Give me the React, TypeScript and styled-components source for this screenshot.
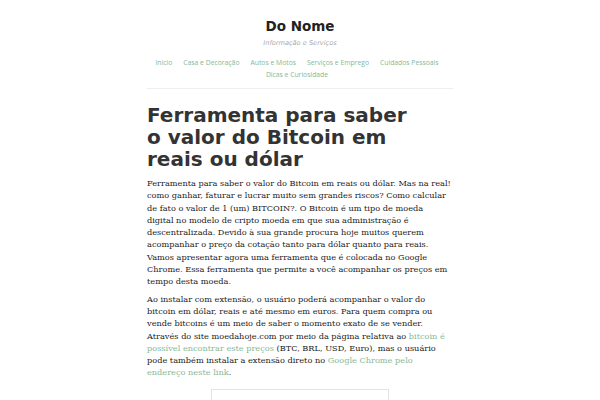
import React from 'react';
import styled, { createGlobalStyle } from 'styled-components';

const GlobalStyle = createGlobalStyle`
  html, body {
    margin: 0;
    padding: 0;
    background: #fff;
  }
  body {
    font-family: "DejaVu Serif", serif;
    color: #333;
  }
`;

const Page = styled.div`
  width: 306px;
  margin: 0 auto;
  padding-top: 17px;
`;

const Masthead = styled.header`
  text-align: center;
  padding-bottom: 8px;
  border-bottom: 1px solid #eee;
`;

const SiteTitle = styled.h1`
  margin: 0;
  font-family: "DejaVu Sans", sans-serif;
  font-weight: bold;
  font-size: 13.5px;
  line-height: 19px;
  color: #222;
`;

const Tagline = styled.div`
  margin-top: 1px;
  font-family: "DejaVu Sans", sans-serif;
  font-style: italic;
  font-size: 6.6px;
  line-height: 12px;
  color: #aaa;
`;

const Nav = styled.nav`
  margin-top: 8px;
  display: flex;
  flex-wrap: wrap;
  justify-content: center;
  column-gap: 11px;
  padding-right: 6px;
  font-family: "Open Sans", sans-serif;
  font-size: 6.8px;
  line-height: 11.5px;
`;

const NavLink = styled.a`
  color: #86b896;
  text-decoration: none;
`;

const Article = styled.article`
  padding: 15px 0 0;
`;

const Title = styled.h2`
  margin: 0 0 7px;
  max-width: 272px;
  font-family: "DejaVu Sans", sans-serif;
  font-weight: bold;
  font-size: 20px;
  line-height: 22px;
  color: #333;
`;

const Para = styled.p`
  margin: 0 0 5px;
  font-size: 8.2px;
  line-height: 12.3px;
  color: #222;
`;

const Link = styled.a`
  color: #86b896;
  text-decoration: none;
`;

const Embed = styled.div`
  width: 176px;
  height: 40px;
  margin: 10px auto 0;
  border: 1px solid #e4e4e4;
  border-bottom: none;
`;

const menu = [
  'Início',
  'Casa e Decoração',
  'Autos e Motos',
  'Serviços e Emprego',
  'Cuidados Pessoais',
  'Dicas e Curiosidade',
];

export default function App() {
  return (
    <>
      <GlobalStyle />
      <Page>
        <Masthead>
          <SiteTitle>Do Nome</SiteTitle>
          <Tagline>Informação e Serviços</Tagline>
          <Nav>
            {menu.map((item) => (
              <NavLink key={item} href="#">{item}</NavLink>
            ))}
          </Nav>
        </Masthead>
        <Article>
          <Title>Ferramenta para saber o valor do Bitcoin em reais ou dólar</Title>
          <Para>
            Ferramenta para saber o valor do Bitcoin em reais ou dólar. Mas na real!
            como ganhar, faturar e lucrar muito sem grandes riscos? Como calcular
            de fato o valor de 1 (um) BITCOIN?. O Bitcoin é um tipo de moeda<br />
            digital no modelo de cripto moeda em que sua administração é
            descentralizada. Devido à sua grande procura hoje muitos querem
            acompanhar o preço da cotação tanto para dólar quanto para reais.
            Vamos apresentar agora uma ferramenta que é colocada no Google
            Chrome. Essa ferramenta que permite a você acompanhar os preços em
            tempo desta moeda.
          </Para>
          <Para>
            Ao instalar com extensão, o usuário poderá acompanhar o valor do
            bitcoin em dólar, reais e até mesmo em euros. Para quem compra ou
            vende bitcoins é um meio de saber o momento exato de se vender.
            Através do site moedahoje.com por meio da página relativa ao{' '}
            <Link href="#">bitcoin é possível encontrar este preços</Link> (BTC, BRL, USD, Euro), mas o usuário
            pode também instalar a extensão direto no{' '}
            <Link href="#">Google Chrome pelo endereço neste link</Link>.
          </Para>
          <Embed />
        </Article>
      </Page>
    </>
  );
}
